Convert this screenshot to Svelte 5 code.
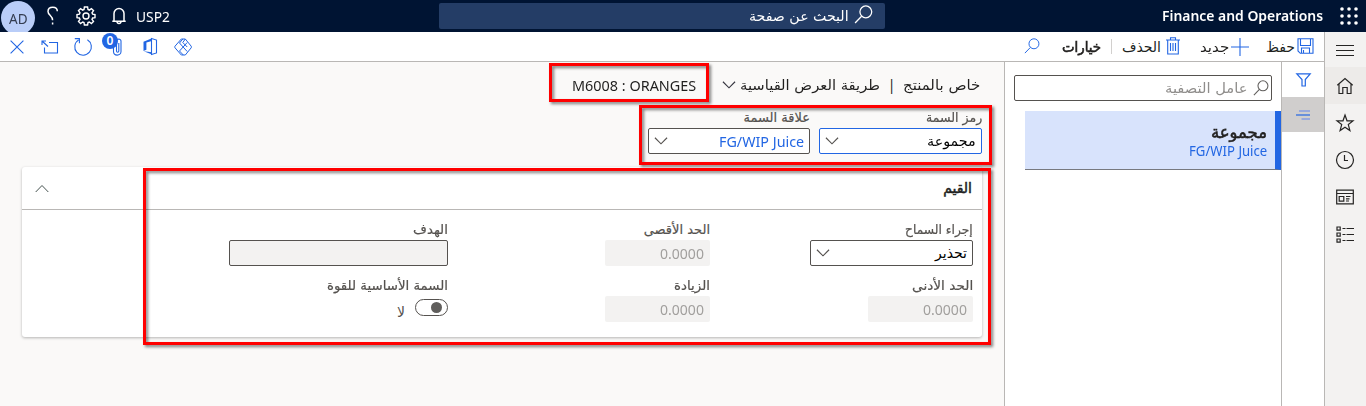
<script>
  // Sets the label to an exact width, keeping Arabic letters joined.
  function fit(node, width) {
    const apply = () => {
      const natural = node.offsetWidth;
      if (natural) node.style.transform = `scaleX(${width / natural})`;
    };
    apply();
    document.fonts?.ready.then(apply);
  }
</script>

{#snippet label(text, width, cls = '', rtl = true)}
  <span class="t {cls}" class:rtl style="width:{width}px"><span class="in" dir={rtl ? 'rtl' : 'ltr'} use:fit={width}>{text}</span></span>
{/snippet}

{#snippet chevron(cls)}
  <svg class={cls} width="15" height="10" viewBox="0 0 15 10"><path d="M1 1.5 7.5 8 14 1.5" /></svg>
{/snippet}

{#snippet lens(size)}
  <svg width={size} height={size} viewBox="0 0 18 18"><circle cx="11.2" cy="6.5" r="5.6" /><path d="M7.2 10.6 1 17" /></svg>
{/snippet}

<div class="app">
  <header class="top">
    <div class="avatar">{@render label('AD', 19, '', false)}</div>
    <svg class="help" width="12" height="20" viewBox="0 0 12 20"><path d="M10.300 5.300C10.300 2.700 8.200 1.300 5.800 1.300 3 1.300 1 3 1 5.500c0 3.600 4.600 4.200 4.600 8.800M5.600 16.600v2" /></svg>
    <svg class="gear" width="20" height="20" viewBox="0 0 20 20"><path d="M8.400 1h3.200l.4 2.500 1.300.6 2.100-1.500 2.100 2.100L16 6.800l.6 1.300 2.400.4v3.100l-2.400.4-.6 1.300 1.500 2.100-2.100 2.100-2.100-1.500-1.300.6-.4 2.400H8.400L8 16.600 6.700 16l-2.100 1.500-2.100-2.100L4 13.300 3.400 12 1 11.600V8.500l2.400-.4L4 6.800 2.500 4.700l2.100-2.100 2.100 1.500L8 3.500z" /><circle cx="10" cy="10" r="3" /></svg>
    <svg class="bell" width="16" height="18" viewBox="0 0 16 18"><path d="M1.300 14.200h13.400M3 14V6.500a5 5 0 0 1 10 0V14M6 14.500c.2 2.600 3.800 2.600 4 0" /></svg>
    {@render label('USP2', 34, 'company', false)}
    <div class="search">{@render label('البحث عن صفحة', 100)}<span class="licon">{@render lens(19)}</span></div>
    {@render label('Finance and Operations', 161, 'product', false)}
    <svg class="waffle" width="18" height="18" viewBox="0 0 18 18">
      {#each [2, 9, 16] as y}{#each [2, 9, 16] as x}<circle cx={x} cy={y} r="1.8" />{/each}{/each}
    </svg>
  </header>

  <div class="body">
    <div class="work">
      <div class="actions">
        <svg class="close" width="14" height="14" viewBox="0 0 14 14"><path d="M.6.6 13.400 13.400M13.400.6.6 13.400" /></svg>
        <svg class="pop" width="18" height="14" viewBox="0 0 18 14"><path d="M8 2.500h8.500v10.500H3.500V7.500M1 1l6 5.500M1 5V1h4" /></svg>
        <svg class="refresh" width="20" height="20" viewBox="0 0 20 20"><path d="M14.400 2.800A8.300 8.300 0 1 1 5.600 2.900M1.800 1.600h4.600v4.600" /></svg>
        <div class="attach">
          <svg width="12" height="20" viewBox="0 0 12 20"><path d="M2.500 4v10.500c0 4.800 7.500 4.800 7.500 0V4c0-2.500-4.500-2.500-4.500 0v10c0 1.700 2.300 1.700 2.300 0V6" /></svg>
          <span class="badge">0</span>
        </div>
        <svg class="office" width="14" height="17" viewBox="0 0 14 17"><path d="M8.500.5l5 1.600v12.800l-5 1.600z" /><path class="solid" d="M.5 3.800 9 .300v2.600L3.400 4.500v7.300L.5 13zM.8 13.300l8.200.9v2.400z" /></svg>
        <svg class="diamonds" width="18" height="18" viewBox="0 0 18 18"><path d="M7.300 1 1 8.200q-.6.8 0 1.600L7.300 17h4L17.200 9.800q.5-.8 0-1.600L11.300 1zM8.800 1 5.500 5l7.700 8.500M13.200 4.500 5.500 13" /><path d="M11.300 1 8.800 4.500 13.200 9M9.300 17l-3.800-4" /></svg>
        <span class="grow"></span>
        <span class="findcmd">{@render lens(16)}</span>
        {@render label('خيارات', 39, 'options')}
        <span class="sep"></span>
        {@render label('الحذف', 39)}
        <svg class="trash" width="14" height="18" viewBox="0 0 14 18"><path d="M0 3h14M4.500 3V.7h5V3M1.700 3v14h10.600V3M4.500 6v8M7 6v8M9.500 6v8" /></svg>
        {@render label('جديد', 29)}
        <svg class="plus" width="18" height="18" viewBox="0 0 18 18"><path d="M0 9h18M9 0v18" /></svg>
        {@render label('حفظ', 29)}
        <svg class="save" width="17" height="16" viewBox="0 0 17 16"><path d="M1 .7h15v14.600H3.300L1 13zM3.500 1v6.500h10V1M4.500 15v-5h8v5M6.500 15v-3" /></svg>
      </div>

      <div class="panes">
        <main>
          <div class="title">
            {@render label('M6008 : ORANGES', 124, 'record', false)}
            {@render chevron('tchev')}
            {@render label('طريقة العرض القياسية', 140)}
            <span class="bar">|</span>
            {@render label('خاص بالمنتج', 77)}
          </div>
          <div class="keys">
            <div class="field k2">
              {@render label('علاقة السمة', 67, 'lab')}
              <div class="box">{@render chevron('chev')}{@render label('FG/WIP Juice', 85, 'link', false)}</div>
            </div>
            <div class="field k1">
              {@render label('رمز السمة', 56, 'lab')}
              <div class="box focus">{@render chevron('chev')}{@render label('مجموعة', 49)}</div>
            </div>
          </div>

          <section class="card">
            <div class="cardhead">
              <svg class="up" width="14" height="9" viewBox="0 0 14 9"><path d="M.7 8 7 1.500 13.300 8" /></svg>
              {@render label('القيم', 29, 'head')}
            </div>
            <div class="grid">
              <div class="field">
                {@render label('الهدف', 35, 'lab')}
                <div class="box empty"></div>
              </div>
              <div class="field">
                {@render label('الحد الأقصى', 66, 'lab')}
                <div class="box num">{@render label('0.0000', 44, '', false)}</div>
              </div>
              <div class="field">
                {@render label('إجراء السماح', 68, 'lab')}
                <div class="box wide">{@render chevron('chev')}{@render label('تحذير', 32)}</div>
              </div>
              <div class="field">
                {@render label('السمة الأساسية للقوة', 121, 'lab')}
                <div class="switch">{@render label('لا', 8)}<span class="toggle"><i></i></span></div>
              </div>
              <div class="field">
                {@render label('الزيادة', 36, 'lab')}
                <div class="box num">{@render label('0.0000', 44, '', false)}</div>
              </div>
              <div class="field">
                {@render label('الحد الأدنى', 61, 'lab')}
                <div class="box num">{@render label('0.0000', 44, '', false)}</div>
              </div>
            </div>
          </section>
        </main>

        <aside class="list">
          <div class="filter">{@render label('عامل التصفية', 83)}<span>{@render lens(16)}</span></div>
          <div class="item">
            {@render label('مجموعة', 56, 'name')}
            {@render label('FG/WIP Juice', 78, 'sub', false)}
          </div>
        </aside>

        <div class="tabs">
          <div class="tab"><svg width="15" height="14" viewBox="0 0 15 14"><path d="M.8.800h13.400L9.300 6.500V13H6V6.500z" /></svg></div>
          <div class="tab on"><svg width="15" height="10" viewBox="0 0 15 10"><path class="pale" d="M3 1h11M5.500 9H14" /><path d="M0 5h14" /></svg></div>
        </div>
      </div>
    </div>

    <nav>
      <div class="n menu"><svg width="18" height="12" viewBox="0 0 18 12"><path d="M0 1.500h18M0 6.500h18M0 11.500h18" /></svg></div>
      <div class="n home"><svg width="18" height="18" viewBox="0 0 18 18"><path d="M1.300 8.300 9 1.500l7.700 6.800M3 7v9.500h3.800v-6h4.400v6H15V7" /></svg></div>
      <div class="n"><svg width="18" height="18" viewBox="0 0 18 18"><path d="m9 1 2 5.800 6 .1-4.700 3.700 1.600 5.900L9 13.200l-4.900 3.300 1.600-5.900L1 6.900l6-.1z" /></svg></div>
      <div class="n"><svg width="20" height="20" viewBox="0 0 20 20"><circle cx="10" cy="10" r="8.500" /><path d="M9.500 5v5.500H13" /></svg></div>
      <div class="n"><svg width="18" height="16" viewBox="0 0 18 16"><path d="M.7 1.200h16.600v13.600H.7zM.7 4.500h16.600M3.200 7.500h4.600v4.600H3.200zM10 7.500h4.500M10 9.800h3.500M10 12h3" /></svg></div>
      <div class="n last"><svg width="18" height="17" viewBox="0 0 18 17"><path d="M1 1h3.200v3.200H1zM1 7h3.200v3.200H1zM1 13h3.200v3.200H1zM6.500 2.500h3M10.500 2.500H18M6.500 8.500h3M10.500 8.500H18M6.500 14.500h3M10.500 14.500H18" /></svg></div>
    </nav>
  </div>

  <div class="mark m1"></div>
  <div class="mark m2"></div>
  <div class="mark m3"></div>
</div>

<style>
  .app { position: relative; width: 1366px; height: 406px; overflow: hidden; display: flex; flex-direction: column; background: #faf9f8; font: 14px/20px "Noto Sans", "DejaVu Sans", sans-serif; color: #201f1e; box-sizing: border-box; }
  .app * { box-sizing: border-box; }
  svg { display: block; flex: none; fill: none; stroke: currentColor; stroke-width: 1.2; overflow: visible; }
  .t { display: flex; flex: none; height: 20px; white-space: nowrap; }
  .in { display: block; flex: none; transform-origin: 0 50%; }
  .rtl { justify-content: flex-end; }
  .rtl .in { transform-origin: 100% 50%; font-family: "DejaVu Sans", sans-serif; }

  .top { height: 32px; flex: none; display: flex; align-items: center; background: #001433; color: #fff; overflow: hidden; }
  .avatar { width: 34px; height: 34px; flex: none; margin: 4px 0 0 1px; border-radius: 50%; background: #b9cdf8; color: #333c50; display: flex; align-items: center; justify-content: center; font-size: 15px; }
  .help { margin: 0 0 0 12px; stroke-width: 1.5; }
  .gear { margin-left: 17px; stroke-width: 1.4; }
  .bell { margin-left: 15px; stroke-width: 1.5; }
  .top :global(.company) { margin-left: 9px; font-size: 15px; }
  .search { width: 446px; height: 26px; flex: none; margin-left: 269px; border-radius: 2px; background: #243d66; display: flex; align-items: center; justify-content: flex-end; padding-right: 12px; gap: 5px; }
  .licon { margin-top: -3px; }
  .top :global(.product) { margin-left: 277px; font-weight: 600; }
  .waffle { margin-left: 17px; margin-top: -1px; fill: #fff; stroke: none; }

  .body { flex: 1; display: flex; }
  .work { width: 1325px; border-right: 1px solid #b9b7b5; display: flex; flex-direction: column; }
  .actions { height: 30px; flex: none; display: flex; align-items: center; background: #fff; border-bottom: 1px solid #b9b7b5; padding: 0 10px; }
  .actions svg { color: #2266e3; stroke-width: 1.1; }
  .pop { margin-left: 17px; }
  .refresh { margin-left: 14px; }
  .attach { position: relative; margin-left: 18px; }
  .badge { position: absolute; left: -9px; top: -4px; width: 16px; height: 16px; border-radius: 50%; background: #2266e3; color: #fff; font-size: 12px; line-height: 15px; text-align: center; font-weight: 600; }
  .office { margin-left: 20px; }
  .office .solid { fill: currentColor; stroke: none; }
  .actions .diamonds { margin: 0 0 0 17px; stroke-width: 1; }
  .grow { flex: 1; }
  .findcmd { margin: -1px 22px 0 0; }
  .actions :global(.options) { -webkit-text-stroke: .6px currentColor; }
  .sep { width: 1px; height: 15px; background: #d2d0ce; margin: 0 10px; }
  .trash { margin: -1px 20px 0 5px; }
  .plus { margin: 0 17px 0 2px; }
  .save { margin: -1px 0 0 2px; }

  .panes { flex: 1; display: flex; }
  main { width: 1005px; flex: none; border-right: 1px solid #b9b7b5; padding: 13px 22px 0; display: flex; flex-direction: column; }
  .title { height: 20px; display: flex; justify-content: flex-end; align-items: center; padding-right: 2px; }
  .title :global(.record) { font-size: 15px; }
  .tchev { width: 14px; margin: 0 4px 0 26px; color: #35353f; }
  .title .bar { width: 23px; text-align: center; }
  .keys { display: flex; justify-content: flex-end; gap: 9px; margin-top: 14px; }
  .field { display: flex; flex-direction: column; align-items: flex-end; }
  .field :global(.lab) { color: #55524f; font-size: 13px; -webkit-text-stroke: .2px currentColor; }
  .box { height: 26px; flex: none; border: 1px solid #55524f; border-radius: 2px; background: #fff; color: #000; display: flex; align-items: center; justify-content: space-between; padding: 0 5px; }
  .k1, .k1 .box, .wide { width: 163px; }
  .k2, .k2 .box { width: 162px; }
  .box.focus { border-color: #2266e3; }
  .box :global(.link) { color: #2266e3; font-size: 15px; }
  .chev { width: 14px; color: #55524f; }
  .keys .field :global(.lab) { margin-top: -1px; }

  .card { margin-top: 13px; width: 960px; height: 170px; background: #fff; border-radius: 3px; box-shadow: 0 1px 3px rgba(0, 0, 0, .28); }
  .cardhead { height: 43px; display: flex; justify-content: space-between; align-items: center; padding: 0 10px 0 13px; border-bottom: 1px solid #b9b7b5; }
  .up { color: #45524f; stroke-width: 1; }
  .cardhead :global(.head) { -webkit-text-stroke: .5px currentColor; }
  .grid { display: grid; grid-template-columns: 426px 262px 263px; grid-template-rows: 56px 56px; padding-top: 10px; }
  .empty { width: 219px; background: #f3f2f1; }
  .num { width: 105px; background: #f3f2f1; border: 0; color: #a19f9d; justify-content: flex-end; padding: 0 6px 1px 0; font-size: 15px; }
  .switch { display: flex; align-items: flex-start; gap: 10px; padding-top: 3px; color: #55524f; }
  .switch :global(.t) { margin-top: 3px; }
  .toggle { width: 33px; height: 17px; border: 1px solid #55524f; border-radius: 9px; padding: 2px 0 0 15px; }
  .toggle i { display: block; width: 11px; height: 11px; border-radius: 50%; background: #605e5c; }

  .list { width: 276px; flex: none; background: #fff; padding: 13px 0 0 9px; display: flex; flex-direction: column; }
  .filter { width: 258px; height: 26px; border: 1px solid #55524f; border-radius: 2px; display: flex; align-items: center; justify-content: flex-end; gap: 5px; padding-right: 2px; color: #8f8d8b; }
  .filter svg { color: #605e5c; }
  .item { height: 59px; margin: 10px 0 0 11px; background: #d8e3fc; border-bottom: 1px solid #77797f; border-right: 6px solid #2266e3; padding: 11px 8px 0 0; display: flex; flex-direction: column; align-items: flex-end; }
  .item :global(.name) { font-size: 17px; -webkit-text-stroke: .6px currentColor; }
  .item :global(.sub) { color: #2266e3; font-size: 14px; margin-top: -1px; }

  .tabs { width: 43px; flex: none; border-left: 1px solid #b9b7b5; background: #fff; color: #2266e3; }
  .tab { height: 35px; display: flex; align-items: center; justify-content: center; }
  .on { background: #d0cecd; }
  .pale { stroke: #99a9dc; stroke-width: 2; }

  nav { width: 41px; background: #f3f2f1; color: #252423; }
  .n { height: 37px; display: flex; align-items: center; justify-content: center; padding-right: 2px; }
  .menu { height: 35px; }
  .home { background: #edebe9; }
  .last { padding-top: 2px; }

  .mark { position: absolute; border: 3px solid #f00; filter: drop-shadow(2px 2px 1.5px rgba(0, 0, 0, .5)); }
  .m1 { left: 549px; top: 63px; width: 160px; height: 39px; }
  .m2 { left: 639px; top: 105px; width: 353px; height: 60px; }
  .m3 { left: 143px; top: 168px; width: 848px; height: 177px; }
</style>
